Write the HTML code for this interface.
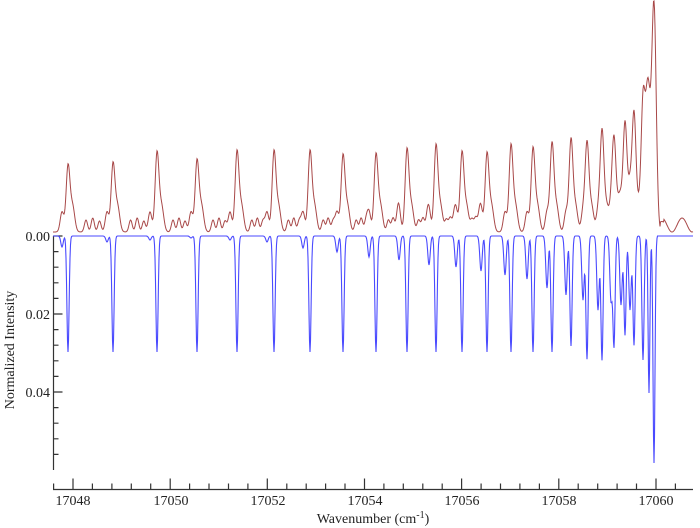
<!DOCTYPE html>
<html><head><meta charset="utf-8"><style>
html,body{margin:0;padding:0;background:#fff;width:700px;height:528px;overflow:hidden}
svg{display:block}
text{font-family:"Liberation Serif",serif;fill:#222}
</style></head><body>
<svg id="s" width="700" height="528" viewBox="0 0 700 528">
<g id="axes" stroke="#333" stroke-width="1.2" fill="none"></g>
<path id="red" fill="none" stroke="#a84848" stroke-width="1"/>
<path id="blue" fill="none" stroke="#4a4aff" stroke-width="1.1"/>
<text x="50" y="241" font-size="14" text-anchor="end">0.00</text>
<text x="50" y="319" font-size="14" text-anchor="end">0.02</text>
<text x="50" y="397" font-size="14" text-anchor="end">0.04</text>
<text transform="translate(14,350) rotate(-90)" font-size="14" text-anchor="middle">Normalized Intensity</text>
<text x="73" y="505" font-size="14" text-anchor="middle">17048</text>
<text x="171" y="505" font-size="14" text-anchor="middle">17050</text>
<text x="268" y="505" font-size="14" text-anchor="middle">17052</text>
<text x="365" y="505" font-size="14" text-anchor="middle">17054</text>
<text x="462" y="505" font-size="14" text-anchor="middle">17056</text>
<text x="559" y="505" font-size="14" text-anchor="middle">17058</text>
<text x="656" y="505" font-size="14" text-anchor="middle">17060</text>
<text x="373" y="523" font-size="14" text-anchor="middle">Wavenumber (cm<tspan font-size="10" dy="-5">-1</tspan><tspan dy="5">)</tspan></text>
</svg>
<script>
var ax=document.getElementById('axes'),d='';
d+='M53.5 236V470 ';
for(var k=0;k<=14;k++){var y=236+k*15.6;d+='M53.5 '+y.toFixed(1)+'h'+(k%5==0?9:5)+' ';}
d+='M53 489.5H693 ';
for(var k=0;k<=32;k++){var v=17047.6+0.4*k;var x=73+(v-17048)*48.58;if(x>693)break;var maj=Math.abs(v-Math.round(v))<0.01&&Math.round(v)%2==0;d+='M'+x.toFixed(1)+' 489.5v'+(maj?-11:-6)+' ';}
var p=document.createElementNS('http://www.w3.org/2000/svg','path');p.setAttribute('d',d);ax.appendChild(p);
var M=[68,113,157,197,237,274,310,343,376,407,436,462,487,511,533,552,571,587,602,614,625,634,643];
var MD=[352,352,352,352,352,352,352,352,352,352,352,352,352,352,352,352,346,359,360,345,335,345,360];
var S=[62,107,150,191,230,267,303,337,369,399,429,456,481,505,527,547,566,583,598,611,621,630];
var SD=[247,242,240,238,240,242,248,252,257,260,265,267,271,275,279,288,295,300,310,300,305,310];
var RY=[167,165,154,162,153,153,153,157,156,151,147,154,155,147,150,145,141,145,133,143,126,118,112];
function g(x,c,s){var t=(x-c)/s;return Math.exp(-t*t/2);}
var b='',r='';
for(var x=53;x<=693;x+=0.5){
 var yb=236;
 for(var i=0;i<M.length;i++)yb+=(MD[i]-236)*g(x,M[i],1.1);
 for(var i=0;i<S.length;i++)yb+=(SD[i]-236)*g(x,S[i],1.2);
 yb+=(393-236)*g(x,649,0.9)+(463-236)*g(x,654,1.0);
 if(x>657)yb=236;
 b+=(x==53?'M':'L')+x+' '+yb.toFixed(1)+' ';
 var yr=232;
 for(var i=0;i<M.length;i++){yr-=(232-RY[i])*g(x,M[i],1.9);yr-=26*g(x,M[i]+4.5,2.2);}
 for(var i=0;i<S.length;i++)yr-=20*g(x,S[i],1.8);
 for(var i=0;i<M.length-1;i++){var sp=M[i+1]-M[i];if(sp<25)continue;
  yr-=12*g(x,M[i]+sp*0.4,1.6);yr-=14*g(x,M[i]+sp*0.55,1.6);yr-=11*g(x,M[i]+sp*0.7,1.6);}
 yr-=120*g(x,648,2.5)+225*g(x,654,2.2);
 if(x>660){yr=225+7*Math.cos((x-672)/3.2)*(x<664?0.5:1);}
 yr=Math.max(yr,1);
 r+=(x==53?'M':'L')+x+' '+yr.toFixed(1)+' ';
}
document.getElementById('blue').setAttribute('d',b);
document.getElementById('red').setAttribute('d',r);
</script>
</body></html>
